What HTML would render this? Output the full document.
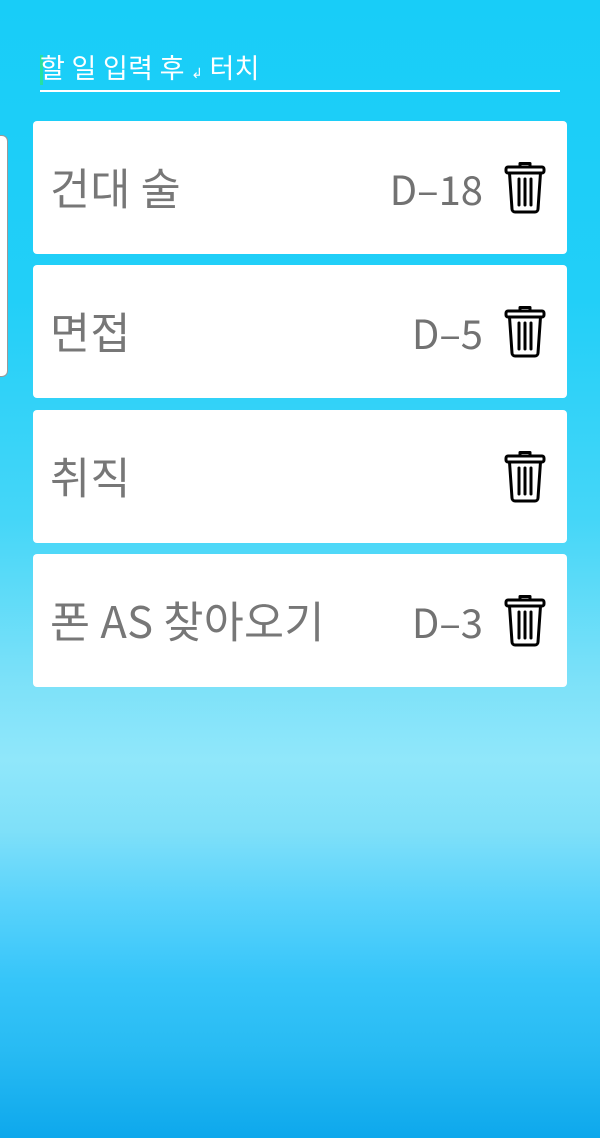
<!DOCTYPE html>
<html><head><meta charset="utf-8">
<style>
html,body{margin:0;padding:0}
body{width:600px;height:1138px;overflow:hidden;position:relative;
background:linear-gradient(to bottom,#18cdf8 0px,#22cff8 300px,#45d6f8 520px,#7ce1f9 680px,#90e7fa 760px,#7fe0f9 830px,#5ad3fb 900px,#36c5f9 980px,#28bbf3 1050px,#0ea8ec 1138px);
font-family:"Liberation Sans","Noto Sans CJK KR",sans-serif}
.inp{position:absolute;left:40px;top:50px;width:520px;height:40px;border-bottom:2px solid #fff;color:#fff;font-size:27px;letter-spacing:0.3px;line-height:38px;font-family:"Noto Sans CJK KR",sans-serif}
.inp span.t2{position:relative;top:-2px}
.cur{position:absolute;left:0;top:5px;width:3px;height:30px;background:#27e0a0}
.side{position:absolute;left:-10px;top:135px;width:16px;height:240px;background:#fff;border:1px solid #999;border-radius:6px}
.card{position:absolute;left:33px;width:534px;height:133px;background:#fff;border-radius:4px;color:#777;font-family:"Noto Sans CJK KR",sans-serif;font-weight:400}
.t{position:absolute;left:17px;font-size:43.5px;letter-spacing:0.3px;line-height:1;top:44px}
.d{position:absolute;right:84px;font-size:40px;line-height:1;top:47px;color:#727272}
.tr{position:absolute;left:470px;top:40px}
</style></head><body>
<div class="inp"><div class="cur"></div><span class="t2">할 일 입력 후 <span style="font-size:14px">↲</span> 터치</span></div>
<div class="side"></div>

<div class="card" style="top:121px"><div class="t">건대 술</div><div class="d">D–18</div>
<svg class="tr" width="44" height="54" viewBox="0 0 44 54"><g fill="none" stroke="#000" stroke-width="3" stroke-linejoin="round" stroke-linecap="round"><path d="M17 6V2.5h10V6"/><rect x="3" y="6" width="38" height="6" rx="2"/><path d="M6.5 12l2.5 36a3 3 0 0 0 3 3h20a3 3 0 0 0 3-3l2.5-36"/><path d="M16 18v26M22 18v26M28 18v26"/></g></svg></div>

<div class="card" style="top:265px"><div class="t">면접</div><div class="d">D–5</div>
<svg class="tr" width="44" height="54" viewBox="0 0 44 54"><g fill="none" stroke="#000" stroke-width="3" stroke-linejoin="round" stroke-linecap="round"><path d="M17 6V2.5h10V6"/><rect x="3" y="6" width="38" height="6" rx="2"/><path d="M6.5 12l2.5 36a3 3 0 0 0 3 3h20a3 3 0 0 0 3-3l2.5-36"/><path d="M16 18v26M22 18v26M28 18v26"/></g></svg></div>

<div class="card" style="top:410px"><div class="t">취직</div>
<svg class="tr" width="44" height="54" viewBox="0 0 44 54"><g fill="none" stroke="#000" stroke-width="3" stroke-linejoin="round" stroke-linecap="round"><path d="M17 6V2.5h10V6"/><rect x="3" y="6" width="38" height="6" rx="2"/><path d="M6.5 12l2.5 36a3 3 0 0 0 3 3h20a3 3 0 0 0 3-3l2.5-36"/><path d="M16 18v26M22 18v26M28 18v26"/></g></svg></div>

<div class="card" style="top:554px"><div class="t">폰 AS 찾아오기</div><div class="d">D–3</div>
<svg class="tr" width="44" height="54" viewBox="0 0 44 54"><g fill="none" stroke="#000" stroke-width="3" stroke-linejoin="round" stroke-linecap="round"><path d="M17 6V2.5h10V6"/><rect x="3" y="6" width="38" height="6" rx="2"/><path d="M6.5 12l2.5 36a3 3 0 0 0 3 3h20a3 3 0 0 0 3-3l2.5-36"/><path d="M16 18v26M22 18v26M28 18v26"/></g></svg></div>
</body></html>
